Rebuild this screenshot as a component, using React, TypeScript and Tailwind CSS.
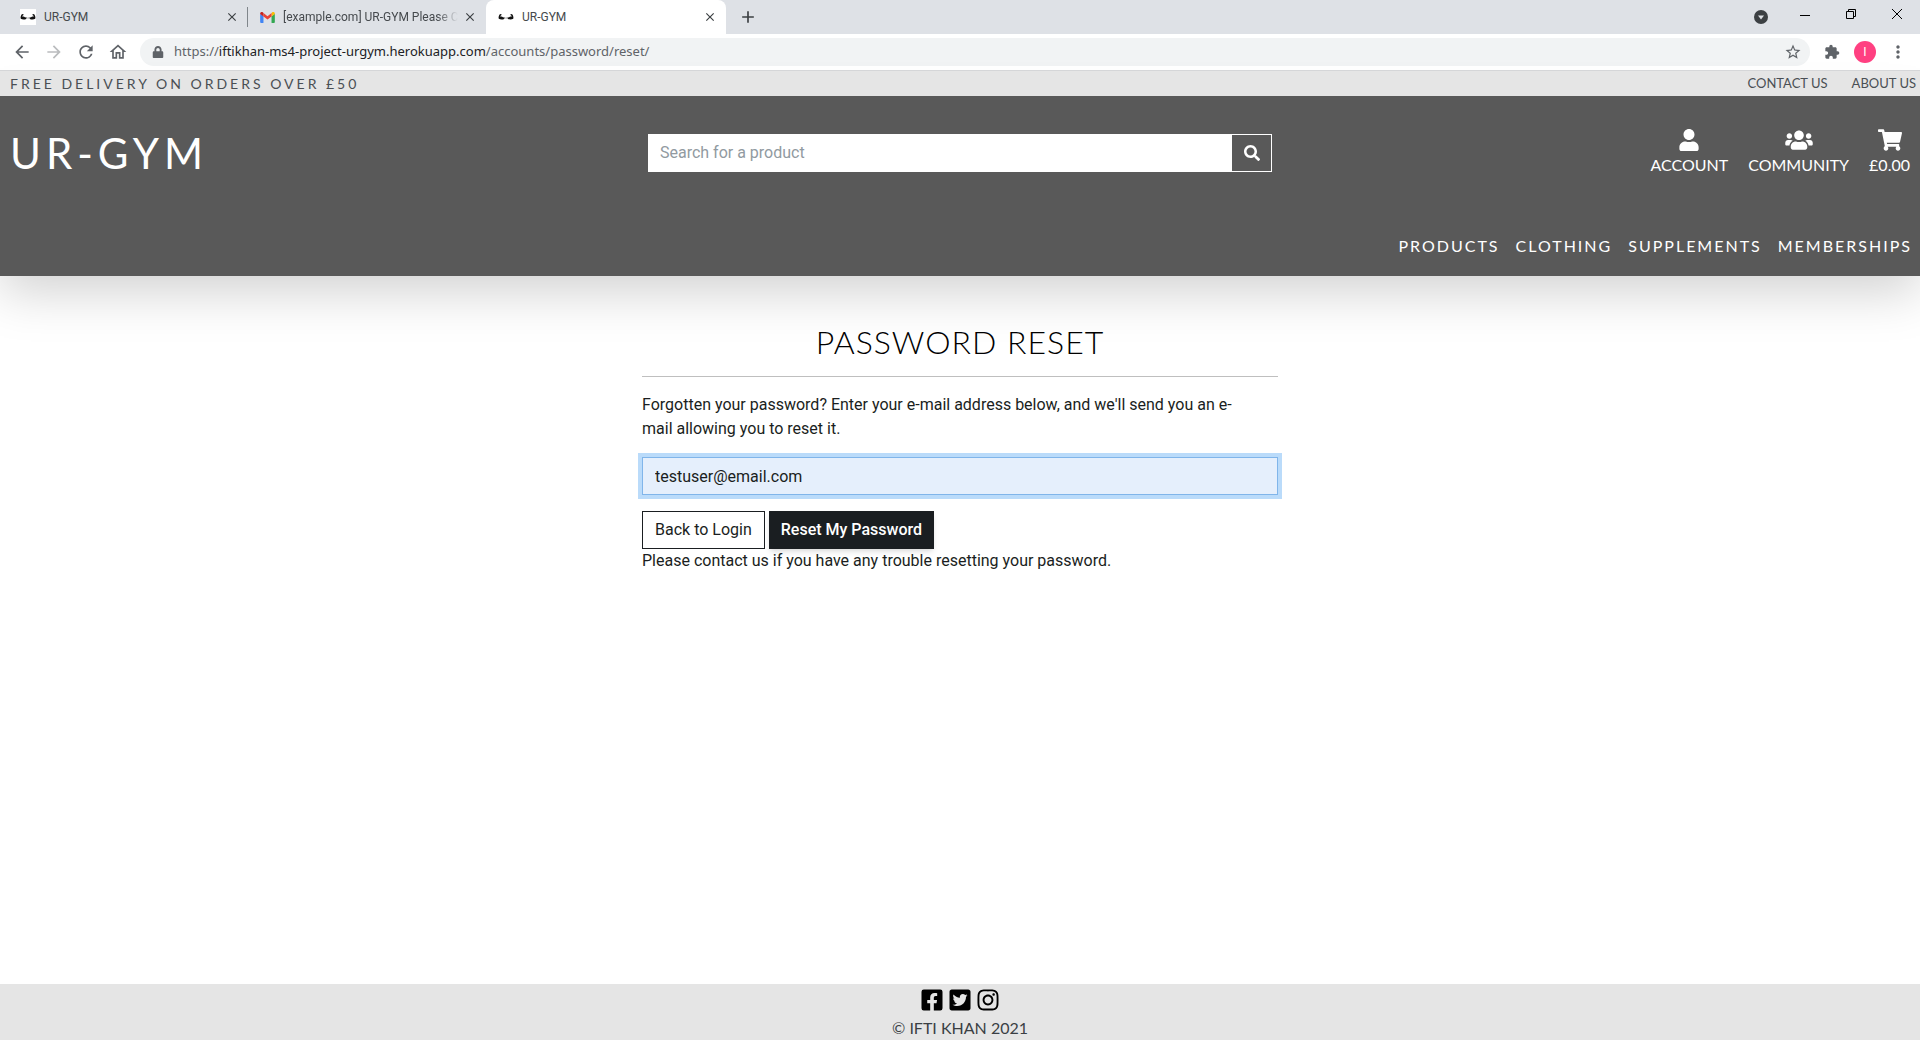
import React from "react";
import { FaUser, FaUsers, FaShoppingCart, FaSearch, FaFacebookSquare, FaTwitterSquare, FaInstagram, FaLock } from "react-icons/fa";
import { MdArrowBack, MdArrowForward, MdRefresh, MdOutlineHome, MdStarBorder, MdExtension, MdMoreVert, MdClose, MdAdd } from "react-icons/md";

const display = "font-['Lato',sans-serif]";
const body = "font-['Roboto',sans-serif] text-base";

function ArmsIcon() {
  return (
    <svg viewBox="0 0 16 16" className="size-4 shrink-0 bg-white" aria-hidden="true">
      <path d="M.8 9.800C.2 8.500.9 6.300 1.800 5.300l1.400-.2.400.9-1.100.7-.2 1.100c1-.5 2-.3 2.600.5l1.300.3v1.300c-1.800.8-4 .7-5.400-.1z" fill="#111" />
      <path d="M15.200 9.800c.6-1.300-.1-3.500-1-4.500l-1.400-.2-.4.9 1.100.7.2 1.100c-1-.5-2-.3-2.600.5l-1.300.3v1.300c1.800.8 4 .7 5.400-.1z" fill="#111" />
      <path d="M6.500 8v1.800M8 8.300v1.500M9.300 8v1.800" stroke="#888" strokeWidth=".8" />
    </svg>
  );
}

function GmailIcon() {
  return (
    <svg viewBox="0 0 16 12" className="h-[11px] w-[15px] shrink-0" aria-hidden="true">
      <path d="M0 2v9a1 1 0 0 0 1 1h2.600V4.700z" fill="#4285f4" />
      <path d="M16 2v9a1 1 0 0 1-1 1h-2.600V4.700z" fill="#34a853" />
      <path d="M12.400 1.200v3.700L16 2.200V1.600C16 .1 14.300-.5 13.200.4z" fill="#fbbc04" />
      <path d="M3.600 4.900V1.200L8 4.500l4.400-3.300v3.700L8 8.200z" fill="#ea4335" />
      <path d="M0 1.600v.6l3.600 2.700V1.200L2.800.4C1.700-.5 0 .1 0 1.600z" fill="#c5221f" />
    </svg>
  );
}

function TabClose() {
  return (
    <button type="button" aria-label="Close tab" className="flex size-4 shrink-0 items-center justify-center text-[#3c4043]">
      <MdClose className="size-3.5" />
    </button>
  );
}

function TabStrip() {
  return (
    <div className="flex h-[34px] items-stretch bg-[#dee1e6] font-['Roboto',sans-serif] text-xs text-[#45494d]">
      <div className="flex w-[247px] items-center pr-[7px] pl-5">
        <ArmsIcon />
        <span className="ml-2 grow">UR-GYM</span>
        <TabClose />
      </div>
      <div className="flex w-[239px] items-center">
        <span className="mr-3 h-5 w-px bg-[#80868b]" />
        <GmailIcon />
        <span className="ml-2 w-[175px] shrink-0 overflow-hidden whitespace-nowrap [mask-image:linear-gradient(to_right,black_88%,transparent)]">
          [example.com] UR-GYM Please C
        </span>
        <span className="ml-1"><TabClose /></span>
      </div>
      <div className="flex w-60 items-center rounded-t-lg bg-white pr-2 pl-3">
        <ArmsIcon />
        <span className="ml-2 grow">UR-GYM</span>
        <TabClose />
      </div>
      <button type="button" aria-label="New tab" className="ml-3 flex w-5 items-center justify-center text-[#3c4043]">
        <MdAdd className="size-5" />
      </button>
      <div className="ml-auto flex items-center">
        <button type="button" aria-label="Search tabs" className="mr-8">
          <svg viewBox="0 0 14 14" className="size-3.5" aria-hidden="true">
            <circle cx="7" cy="7" r="7" fill="#3c4043" />
            <path d="M4 5.500h6L7 9.500z" fill="#dee1e6" />
          </svg>
        </button>
        <button type="button" aria-label="Minimize" className="mr-9 mb-1">
          <svg viewBox="0 0 10 10" className="size-2.5" stroke="#000" aria-hidden="true"><path d="M0 5.500h10" /></svg>
        </button>
        <button type="button" aria-label="Restore" className="mr-9 mb-1.5">
          <svg viewBox="0 0 10 10" className="size-2.5" fill="none" stroke="#000" aria-hidden="true"><path d="M.5 2.500h7v7h-7zM2.500 2.500v-2h7v7h-2" /></svg>
        </button>
        <button type="button" aria-label="Close window" className="mr-[18px] mb-1.5">
          <svg viewBox="0 0 10 10" className="size-2.5" stroke="#000" aria-hidden="true"><path d="M0 0l10 10M10 0L0 10" /></svg>
        </button>
      </div>
    </div>
  );
}

function Toolbar() {
  return (
    <div className="flex h-9 items-center bg-white px-3 text-[#5f6368]">
      <div className="flex items-center gap-3">
        <button type="button" aria-label="Back"><MdArrowBack className="size-5" /></button>
        <button type="button" aria-label="Forward" className="text-[#babcbe]"><MdArrowForward className="size-5" /></button>
        <button type="button" aria-label="Reload"><MdRefresh className="size-5" /></button>
        <button type="button" aria-label="Home"><MdOutlineHome className="size-5" /></button>
      </div>
      <div className="ml-3 flex h-7 grow items-center rounded-full bg-[#f1f3f4] pr-2 pl-3">
        <FaLock className="size-3 shrink-0" />
        <div role="textbox" aria-label="Address" className="ml-2.5 grow text-[13px]">
          https://<span className="text-[#202124]">iftikhan-ms4-project-urgym.herokuapp.com</span>/accounts/password/reset/
        </div>
        <button type="button" aria-label="Bookmark"><MdStarBorder className="size-[18px]" /></button>
      </div>
      <button type="button" aria-label="Extensions" className="ml-3.5"><MdExtension className="size-4" /></button>
      <button type="button" aria-label="Profile" className="ml-3.5 flex size-[22px] items-center justify-center rounded-full bg-[#ff4081] font-['Roboto',sans-serif] text-xs text-white">I</button>
      <button type="button" aria-label="Menu" className="ml-3"><MdMoreVert className="size-5" /></button>
    </div>
  );
}

const links = ["PRODUCTS", "CLOTHING", "SUPPLEMENTS", "MEMBERSHIPS"];

export default function App() {
  return (
    <div className="flex min-h-screen flex-col bg-white font-['Noto_Sans',sans-serif]">
      <TabStrip />
      <Toolbar />
      <div className={`relative z-10 flex h-[26px] items-center justify-between border-t border-[#d5d6d8] bg-[#e5e5e5] pr-1 pl-2.5 text-[#4a4f54] ${display}`}>
        <p className="text-sm tracking-[3px]">FREE DELIVERY ON ORDERS OVER £50</p>
        <nav className="flex gap-6 text-[13px]">
          <a href="#contact">CONTACT US</a>
          <a href="#about">ABOUT US</a>
        </nav>
      </div>
      <header className={`h-[180px] bg-[#595959] text-white shadow-[0_16px_48px_rgba(0,0,0,0.18)] ${display}`}>
        <div className="grid grid-cols-3 items-center pt-8">
          <a href="#home" className="pl-2.5 text-[42px] leading-[50px] tracking-[5px]">UR-GYM</a>
          <form className="mx-2 flex h-[38px]">
            <input type="search" aria-label="Search for a product" placeholder="Search for a product" className={`min-w-0 grow bg-white px-3 leading-6 text-black placeholder:text-[#919aa1] ${body}`} />
            <button type="submit" aria-label="Search" className="flex w-[41px] items-center justify-center border border-white"><FaSearch className="size-4" /></button>
          </form>
          <nav className="flex justify-end gap-5 pr-2.5 text-base leading-6">
            <a href="#account" className="flex flex-col items-center gap-0.5"><FaUser className="size-[22px]" />ACCOUNT</a>
            <a href="#community" className="flex flex-col items-center gap-0.5"><FaUsers className="h-[22px] w-7" />COMMUNITY</a>
            <a href="#bag" className="flex flex-col items-center gap-0.5"><FaShoppingCart className="h-[22px] w-6" />£0.00</a>
          </nav>
        </div>
        <nav className="mt-14 flex justify-end gap-4 pr-2 text-base leading-6 tracking-[2px]">
          {links.map((l) => <a key={l} href="#shop">{l}</a>)}
        </nav>
      </header>
      <main className={`mx-auto w-1/3 grow px-0.5 pt-11 leading-6 text-[#1a1e21] ${body}`}>
        <h1 className={`text-center text-[32px] leading-[44px] font-light tracking-[1px] text-black ${display}`}>PASSWORD RESET</h1>
        <hr className="mt-3 border-[#bfbfbf]" />
        <p className="mt-4 leading-6">Forgotten your password? Enter your e-mail address below, and we'll send you an e-<br />mail allowing you to reset it.</p>
        <form className="mt-4">
          <input type="email" aria-label="E-mail" defaultValue="testuser@email.com" className="block h-[38px] w-full border border-[#80b5ea] bg-[#e5effc] px-3 ring-4 ring-[#badbfa] outline-none" />
          <div className="mt-4 flex gap-1">
            <a href="#login" className="flex h-[38px] items-center border border-[#1a1e21] px-3">Back to Login</a>
            <button type="submit" className="h-[38px] bg-[#1a1e21] px-3 font-medium text-white shadow-md">Reset My Password</button>
          </div>
        </form>
        <p>Please contact us if you have any trouble resetting your password.</p>
      </main>
      <footer className={`flex h-14 flex-col items-center bg-[#e5e5e5] pt-1 text-[#3a3f44] ${display}`}>
        <div className="flex gap-1 text-black">
          <a href="#facebook" aria-label="Facebook"><FaFacebookSquare className="size-6" /></a>
          <a href="#twitter" aria-label="Twitter"><FaTwitterSquare className="size-6" /></a>
          <a href="#instagram" aria-label="Instagram"><FaInstagram className="size-6" /></a>
        </div>
        <p className="pt-1 text-base leading-6">© IFTI KHAN 2021</p>
      </footer>
    </div>
  );
}
